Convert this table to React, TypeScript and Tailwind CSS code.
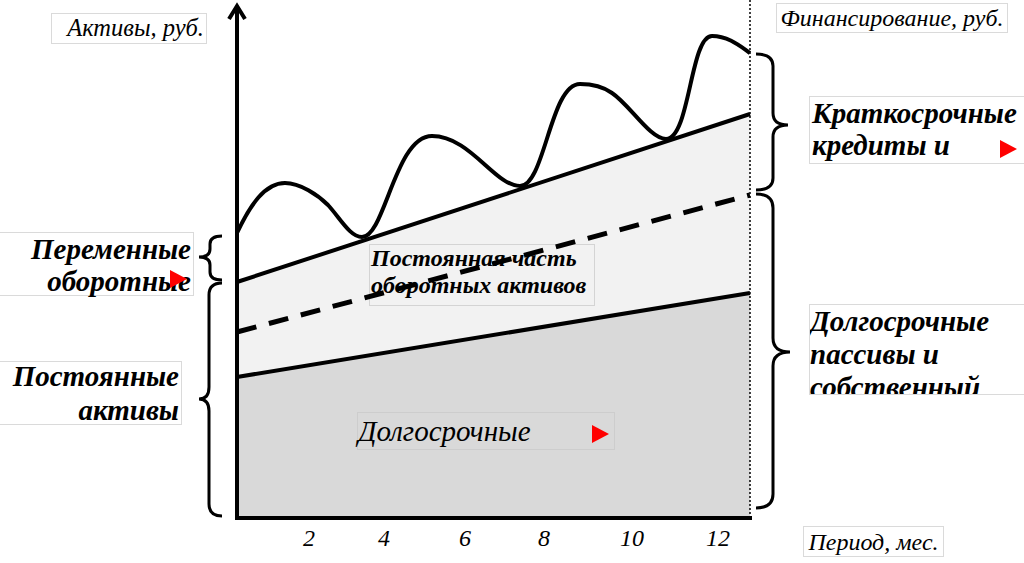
const wave =
  'M237,233 C250,205 265,183 285,183 C300,183 318,195 328,205 C340,218 350,237 362,237 ' +
  'C385,237 395,136 432,136 C470,136 495,186 520,186 C545,186 550,84 580,84 ' +
  'C595,84 605,88 612,93 C630,105 650,139 666,139 C690,139 690,36 712,36 C728,36 740,46 750,53';

function brace(xe: number, xs: number, xt: number, y1: number, y2: number, ym: number, r = 10) {
  return (
    `M${xe},${y1} Q${xs},${y1} ${xs},${y1 + r} L${xs},${ym - r} Q${xs},${ym} ${xt},${ym} ` +
    `Q${xs},${ym} ${xs},${ym + r} L${xs},${y2 - r} Q${xs},${y2} ${xe},${y2}`
  );
}

const ticks = [
  { x: 309, label: '2' },
  { x: 384, label: '4' },
  { x: 465, label: '6' },
  { x: 544, label: '8' },
  { x: 632, label: '10' },
  { x: 718, label: '12' },
];

function RedArrow({ className }: { className: string }) {
  return (
    <svg className={`absolute ${className}`} width="17" height="18" viewBox="0 0 17 18">
      <polygon points="0,0 17,9 0,18" fill="#ff0000" />
    </svg>
  );
}

export default function App() {
  return (
    <div className="relative w-[1024px] h-[563px] overflow-hidden bg-white font-['Liberation_Serif',serif] text-black">
      {/* fills */}
      <svg className="absolute inset-0" width="1024" height="563">
        <polygon points="237,282 750,114 750,293 237,377" fill="#f2f2f2" />
        <polygon points="237,377 750,293 750,518 237,518" fill="#d9d9d9" />
      </svg>

      {/* labels */}
      <div className="absolute left-[51px] top-[13px] w-[156px] h-[31px] border border-[#dadada] flex items-center justify-end pr-[2px] text-[24.5px] italic leading-none">
        Активы, руб.
      </div>
      <div className="absolute left-[776px] top-[3px] w-[232px] h-[30px] border border-[#dadada] flex items-center justify-center text-[24px] italic leading-none">
        Финансирование, руб.
      </div>
      <div className="absolute left-[809px] top-[96px] w-[230px] h-[68px] border border-[#dadada] pl-[2px] text-[29px] font-bold italic leading-[32px]">
        <div>Краткосрочные</div>
        <div>кредиты и</div>
      </div>
      <RedArrow className="left-[1000px] top-[140px]" />

      <div className="absolute left-[-1px] top-[232px] w-[195px] h-[64px] border border-[#dadada] pr-[2px] text-right text-[29px] font-bold italic leading-[32px]">
        <div>Переменные</div>
        <div>оборотные</div>
      </div>
      <RedArrow className="left-[170px] top-[270px]" />

      <div className="absolute left-[-1px] top-[361px] w-[183px] h-[64px] border border-[#dadada] pr-[2px] text-right text-[29px] font-bold italic leading-[34px]">
        <div className="-mt-[3px]">
          <div>Постоянные</div>
          <div>активы</div>
        </div>
      </div>

      <div className="absolute left-[369px] top-[244px] w-[226px] h-[62px] border border-[#d4d4d4] pl-[1px] text-[24px] font-bold italic leading-[27px]">
        <div>Постоянная часть</div>
        <div>оборотных активов</div>
      </div>

      <div className="absolute left-[357px] top-[412px] w-[258px] h-[38px] border border-[#cdcdcd] flex items-center text-[29px] italic leading-none">
        Долгосрочные
      </div>
      <RedArrow className="left-[592px] top-[425px]" />

      <div className="absolute left-[809px] top-[304px] w-[230px] h-[91px] overflow-hidden border border-[#dadada] text-[29px] font-bold italic leading-[33px]">
        <div>Долгосрочные</div>
        <div>пассивы и</div>
        <div>собственный</div>
      </div>

      <div className="absolute left-[803px] top-[526px] w-[141px] h-[31px] border border-[#dadada] flex items-center justify-center text-[24px] italic leading-none">
        Период, мес.
      </div>

      {ticks.map(t => (
        <div
          key={t.label}
          className="absolute top-[524px] w-[40px] -ml-[20px] text-center text-[24px] italic leading-[28px]"
          style={{ left: t.x }}
        >
          {t.label}
        </div>
      ))}

      {/* lines */}
      <svg className="absolute inset-0 pointer-events-none" width="1024" height="563" fill="none" stroke="#000">
        <line x1="750" y1="0" x2="750" y2="518" strokeWidth="1.5" strokeDasharray="2 2" />
        <line x1="237" y1="282" x2="750" y2="114" strokeWidth="4" />
        <line x1="237" y1="332" x2="750" y2="195" strokeWidth="5" strokeDasharray="20 13" />
        <line x1="237" y1="377" x2="750" y2="293" strokeWidth="4" />
        <path d={wave} strokeWidth="4" />
        <line x1="237" y1="6" x2="237" y2="520" strokeWidth="4" />
        <line x1="235" y1="518" x2="752" y2="518" strokeWidth="4" />
        <polyline points="229,19 237,6 245,19" strokeWidth="4" strokeLinejoin="miter" />
        <path d={brace(222, 210, 199, 236, 280, 257, 8)} strokeWidth="3" />
        <path d={brace(222, 209, 199, 283, 516, 399, 12)} strokeWidth="3" />
        <path d={brace(756, 773, 788, 54, 190, 125, 12)} strokeWidth="3" />
        <path d={brace(756, 773, 790, 194, 508, 352, 14)} strokeWidth="3" />
      </svg>
    </div>
  );
}
